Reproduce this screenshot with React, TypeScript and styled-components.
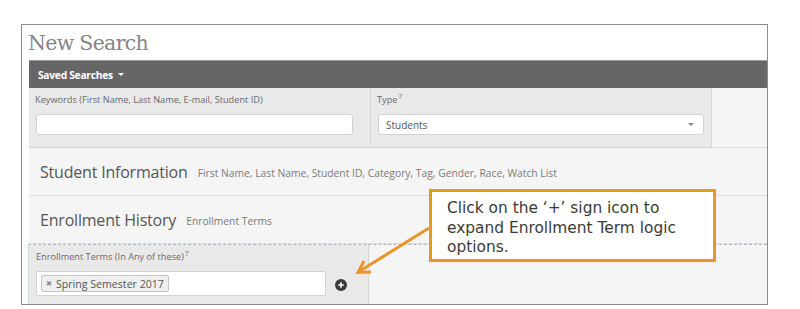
import React from "react";
import styled, { createGlobalStyle } from "styled-components";

const uiFont = `"Open Sans", "Noto Sans", sans-serif`;
const panelBg = "#e9e9e9";
const sectionBg = "#f5f5f5";
const orange = "#ea9528";

const GlobalStyle = createGlobalStyle`
  html, body {
    margin: 0;
    padding: 0;
    background: #ffffff;
  }
  body {
    font-family: ${uiFont};
  }
`;

const Page = styled.div`
  position: relative;
  width: 800px;
  height: 309px;
  padding: 24px 0 0 21px;
  box-sizing: border-box;
  overflow: hidden;
`;

const Frame = styled.div`
  width: 747px;
  height: 281px;
  box-sizing: border-box;
  border: 1px solid #8c8c8c;
  padding-left: 7px;
  display: flex;
  flex-direction: column;
  overflow: hidden;
`;

const Title = styled.div`
  height: 35px;
  display: flex;
  align-items: center;
  margin-left: -1px;
  padding-top: 1px;
  box-sizing: border-box;
  font-family: "DejaVu Serif", "Liberation Serif", serif;
  font-size: 20.5px;
  letter-spacing: -0.7px;
  color: #858585;
`;

const Bar = styled.div`
  height: 28px;
  flex: none;
  background: #666666;
  display: flex;
  align-items: center;
  padding-left: 9px;
  color: #ffffff;
  font-weight: 700;
  font-size: 10.3px;
  letter-spacing: -0.3px;
  border-top: 1px solid #9a9a9a;
  box-sizing: border-box;
`;

const Caret = styled.span`
  display: inline-block;
  margin-left: 5px;
  width: 0;
  height: 0;
  border-left: 3px solid transparent;
  border-right: 3px solid transparent;
  border-top: 3px solid #ffffff;
`;

const FieldsRow = styled.div`
  display: grid;
  grid-template-columns: 342px 341px 1fr;
  height: 60px;
  flex: none;
`;

const Panel = styled.div<{ $wide?: boolean }>`
  background: ${panelBg};
  border-right: 1px solid #d6d6d6;
  border-bottom: 1px solid #d6d6d6;
  padding: ${(p) => (p.$wide ? "6px 17px 0 6px" : "6px 7px 0 6px")};
  box-sizing: border-box;
`;

const Filler = styled.div`
  background: ${sectionBg};
  border-bottom: 1px solid #e2e2e2;
`;

const Label = styled.div`
  font-size: 9.2px;
  color: #6a6a6a;
  height: 14px;
  line-height: 12px;
  white-space: nowrap;
`;

const Help = styled.sup`
  font-size: 8px;
  margin-left: 1px;
  vertical-align: 4px;
  line-height: 0;
`;

const Input = styled.div`
  margin: 6px 0 0 1px;
  height: 21px;
  background: #ffffff;
  border: 1px solid #d2d2d2;
  border-radius: 3px;
  box-sizing: border-box;
  display: flex;
  align-items: center;
  justify-content: space-between;
  padding: 0 9px 0 7px;
  font-size: 10px;
  color: #555555;
`;

const SelectCaret = styled.span`
  width: 0;
  height: 0;
  border-left: 3px solid transparent;
  border-right: 3px solid transparent;
  border-top: 3px solid #888888;
`;

const Section = styled.div`
  height: 47px;
  flex: none;
  background: ${sectionBg};
  border-bottom: 1px solid #dedede;
  display: flex;
  align-items: center;
  padding-left: 11px;
  white-space: nowrap;
`;

const SectionTitle = styled.span`
  font-size: 16px;
  color: #555555;
  letter-spacing: -0.2px;
`;

const SectionHint = styled.span`
  margin-left: 10px;
  margin-top: 3px;
  font-size: 10.3px;
  color: #7a7a7a;
`;

const TermsRow = styled.div`
  display: grid;
  grid-template-columns: 340px 1fr;
  flex: 1;
  border-top: 1px dashed #9fb4ca;
  border-left: 1px dotted #a8bbd0;
  margin-left: -1px;
`;

const TermsPanel = styled.div`
  background: ${panelBg};
  border-right: 1px solid #d6d6d6;
  padding: 6px 0 0 7px;
  box-sizing: border-box;
`;

const TermsLine = styled.div`
  display: flex;
  align-items: center;
  gap: 8px;
  margin-top: 6px;
`;

const TermsInput = styled.div`
  width: 290px;
  height: 25px;
  background: #ffffff;
  border: 1px solid #d2d2d2;
  border-radius: 2px;
  box-sizing: border-box;
  display: flex;
  align-items: center;
  padding-left: 4px;
`;

const Tag = styled.span`
  display: inline-flex;
  align-items: center;
  height: 15px;
  padding: 0 4px;
  background: #efefef;
  border: 1px solid #c4c4c4;
  border-radius: 2px;
  font-size: 10.6px;
  color: #555555;
  white-space: nowrap;
`;

const TagX = styled.span`
  font-size: 7px;
  color: #888888;
  margin-right: 4px;
`;

const PlusIcon = styled.svg`
  width: 12px;
  height: 12px;
  margin-top: 2px;
  margin-left: 1px;
`;

const TermsFiller = styled.div`
  background: ${sectionBg};
`;

const Callout = styled.div`
  position: absolute;
  left: 429px;
  top: 189px;
  width: 287px;
  height: 73px;
  box-sizing: border-box;
  border: 3px solid ${orange};
  background: #ffffff;
  padding: 7px 0 0 15px;
  font-family: "DejaVu Sans", sans-serif;
  font-size: 15.4px;
  line-height: 19.5px;
  color: #3a3a3a;
  white-space: nowrap;
`;

const ArrowLayer = styled.svg`
  position: absolute;
  left: 0;
  top: 0;
  width: 800px;
  height: 309px;
  pointer-events: none;
`;

export default function App() {
  return (
    <>
      <GlobalStyle />
      <Page>
        <Frame>
          <Title>New Search</Title>
          <Bar>
            Saved Searches
            <Caret />
          </Bar>
          <FieldsRow>
            <Panel $wide>
              <Label>Keywords (First Name, Last Name, E-mail, Student ID)</Label>
              <Input />
            </Panel>
            <Panel>
              <Label>
                Type<Help>?</Help>
              </Label>
              <Input>
                Students
                <SelectCaret />
              </Input>
            </Panel>
            <Filler />
          </FieldsRow>
          <Section>
            <SectionTitle>Student Information</SectionTitle>
            <SectionHint>
              First Name, Last Name, Student ID, Category, Tag, Gender, Race, Watch List
            </SectionHint>
          </Section>
          <Section>
            <SectionTitle>Enrollment History</SectionTitle>
            <SectionHint>Enrollment Terms</SectionHint>
          </Section>
          <TermsRow>
            <TermsPanel>
              <Label>
                Enrollment Terms (In Any of these)<Help>?</Help>
              </Label>
              <TermsLine>
                <TermsInput>
                  <Tag>
                    <TagX>✖</TagX>Spring Semester 2017
                  </Tag>
                </TermsInput>
                <PlusIcon viewBox="0 0 12 12">
                  <circle cx="6" cy="6" r="6" fill="#3a3a3a" />
                  <path d="M6 3.2v5.6M3.2 6h5.6" stroke="#ffffff" strokeWidth="1.6" />
                </PlusIcon>
              </TermsLine>
            </TermsPanel>
            <TermsFiller />
          </TermsRow>
        </Frame>
        <ArrowLayer viewBox="0 0 800 309">
          <line x1="429" y1="228" x2="360" y2="271" stroke={orange} strokeWidth="3" />
          <polyline
            points="364,261 358,272.5 371,272"
            fill="none"
            stroke={orange}
            strokeWidth="3"
            strokeLinejoin="miter"
          />
        </ArrowLayer>
        <Callout>
          Click on the ‘+’ sign icon to
          <br />
          expand Enrollment Term logic
          <br />
          options.
        </Callout>
      </Page>
    </>
  );
}
